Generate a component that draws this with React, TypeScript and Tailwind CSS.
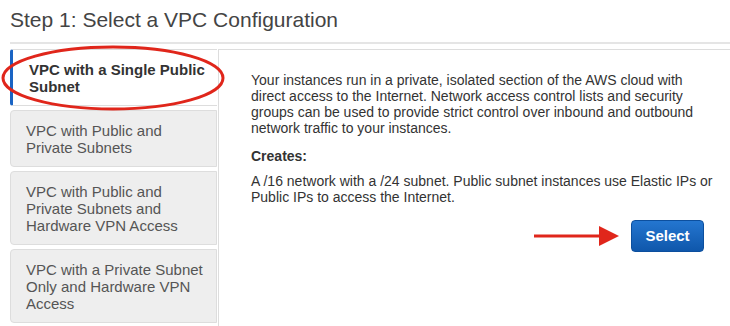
const tabs = [
  { label: "VPC with a Single Public Subnet", active: true },
  { label: "VPC with Public and Private Subnets" },
  { label: "VPC with Public and Private Subnets and Hardware VPN Access" },
  { label: "VPC with a Private Subnet Only and Hardware VPN Access" },
];

export default function App() {
  return (
    <div
      className="relative w-[730px] h-[326px] overflow-hidden bg-white pl-[10px]"
      style={{ fontFamily: '"Liberation Sans", Arial, sans-serif' }}
    >
      <h2 className="pt-[7px] h-[42px] text-[21px] leading-[26px] text-[#444]">
        Step 1: Select a VPC Configuration
      </h2>
      <div className="h-[2px] bg-[#e5e5e5]" />

      <div className="flex mt-[5px]">
        <div className="w-[207px] shrink-0 flex flex-col gap-[4px]">
          {tabs.map((t) =>
            t.active ? (
              <div
                key={t.label}
                className="h-[57px] bg-white border-y border-[#ddd] border-l-[3px] border-l-[#1a64c4] rounded-l-[3px] pl-[16px] pr-1 pt-[11px] text-[15px] leading-[17px] font-bold text-[#333]"
              >
                {t.label}
              </div>
            ) : (
              <div
                key={t.label}
                className="bg-[#eee] border border-[#ddd] rounded-l-[4px] pl-[15px] pr-[8px] pt-[11px] pb-[10px] text-[15px] leading-[17px] text-[#555]"
              >
                {t.label}
              </div>
            )
          )}
        </div>

        <div className="flex-1 h-[280px] border-t border-l border-[#ddd] ml-[1px] pl-[32px] pr-[16px] pt-[22px] text-[14px] leading-[16px] text-[#333]">
          <p>
            Your instances run in a private, isolated section of the AWS cloud with direct access to the
            Internet. Network access control lists and security groups can be used to provide strict
            control over inbound and outbound network traffic to your instances.
          </p>
          <p className="mt-[12px] font-bold">Creates:</p>
          <p className="mt-[9px]">
            A /16 network with a /24 subnet. Public subnet instances use Elastic IPs or Public IPs to
            access the Internet.
          </p>
          <div className="flex items-center justify-end gap-[12px] mt-[15px] pr-[10px]">
            <svg width="85" height="22" viewBox="0 0 85 22">
              <rect x="0" y="9.5" width="67" height="3" fill="#e0261b" />
              <polygon points="65,1 85,11 65,21" fill="#e0261b" />
            </svg>
            <button className="w-[73px] h-[32px] rounded-[4px] border border-[#0c4f9e] bg-gradient-to-b from-[#2476d0] to-[#0f57ab] text-white text-[15px] font-bold">
              Select
            </button>
          </div>
        </div>
      </div>

      <svg className="absolute left-0 top-[45px] pointer-events-none" width="230" height="68" viewBox="0 0 230 68">
        <ellipse cx="113" cy="33" rx="110" ry="31" fill="none" stroke="#e0261b" strokeWidth="3" />
      </svg>
    </div>
  );
}
